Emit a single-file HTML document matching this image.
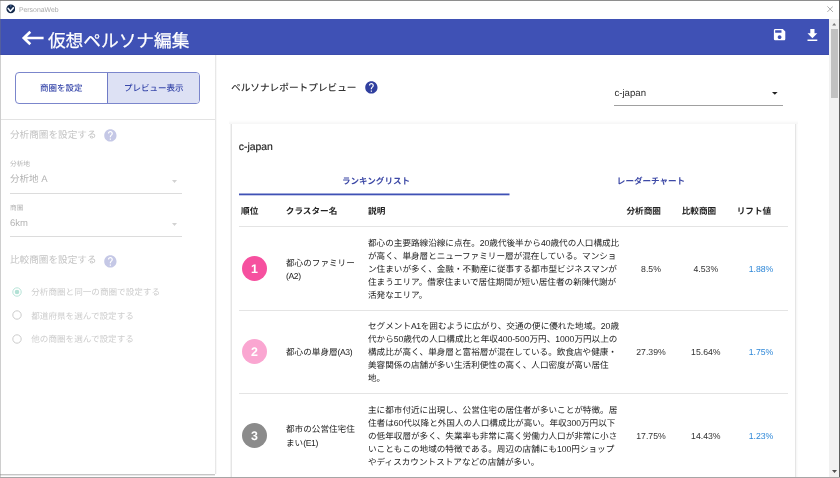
<!DOCTYPE html>
<html lang="ja">
<head>
<meta charset="utf-8">
<title>PersonaWeb</title>
<style>
*{box-sizing:border-box;margin:0;padding:0}
html,body{width:840px;height:478px;overflow:hidden;background:#fff}
body{font-family:"Liberation Sans","Noto Sans CJK JP",sans-serif;color:#222;position:relative;text-rendering:geometricPrecision}
.t{position:absolute;white-space:nowrap;overflow:visible}
.a{position:absolute}
.n{letter-spacing:0}
.k{letter-spacing:-.4px}
.dis{color:#c4c4c4}
.b{font-weight:500}
.bb{font-weight:700}
.ind{color:#3949ab}
.tab{color:#3d49a6}
.hl{position:absolute;height:1px}
.rk{position:absolute;width:25.200px;height:25.200px;border-radius:50%;color:#fff;font-size:12.4px;line-height:27.800px;text-align:center;font-weight:bold}
.ds{position:absolute;left:368px;font-size:8.6px;white-space:nowrap;color:#222}
.ds div{height:13.070px;line-height:13.070px}
.cn{position:absolute;left:286px;font-size:8.6px;white-space:nowrap;color:#222}
.cn div{height:13.070px;line-height:13.070px}
</style>
</head>
<body>
<div id="root" style="position:absolute;left:0;top:0;width:840px;height:478px;will-change:transform">
<div class="a" style="left:0;top:0;width:840px;height:19px;background:#fff"></div>
<svg class="a" style="left:5.600px;top:4.200px" width="9.600" height="9.600" viewBox="0 0 10 10"><circle cx="5" cy="5" r="4.600" fill="#13284a"/><path d="M2.300 4.600L4.600 7.500 7.700 4" stroke="#eef3fb" stroke-width="1.700" fill="none" stroke-linejoin="round" stroke-linecap="round"/><path d="M4.600.9h.9v2.600h-.9z" fill="#6f93c8" opacity=".75"/></svg>
<div class="t" style="left:18.9px;top:4.90px;font-size:6.9px;line-height:12px;height:12px;color:#a8a8a8;">PersonaWeb</div>
<svg class="a" style="left:826.900px;top:5.900px" width="6.300" height="6.300" viewBox="0 0 7 7"><path d="M.4.400l6.200 6.200M6.600.400L.4 6.600" stroke="#8c8c8c" stroke-width=".8" fill="none"/></svg>
<div class="a" style="left:0;top:19px;width:829px;height:36px;background:linear-gradient(#3f51b5 35px,#3c4cab 35px)"></div>
<svg class="a" style="left:21px;top:29.900px" width="23" height="16" viewBox="0 0 23 16"><path d="M22.600 8H3.500M9.300 1.700L2.800 8l6.500 6.300" stroke="#fff" stroke-width="2.700" fill="none" stroke-linejoin="miter"/></svg>
<div class="t" style="left:47.9px;top:27.80px;font-size:17.7px;line-height:26px;height:26px;color:#fff;-webkit-text-stroke:.25px #fff;">仮想ペルソナ編集</div>
<svg class="a" style="left:771.900px;top:27.200px" width="15.200" height="15.200" viewBox="0 0 24 24"><path fill="#fff" d="M17 3H5a2 2 0 0 0-2 2v14a2 2 0 0 0 2 2h14c1.100 0 2-.9 2-2V7l-4-4zm-5 16c-1.660 0-3-1.340-3-3s1.340-3 3-3 3 1.340 3 3-1.340 3-3 3zm3-10H5V5h10v4z"/></svg>
<svg class="a" style="left:804.100px;top:26.850px" width="16.800" height="16.800" viewBox="0 0 24 24"><path fill="#fff" d="M19 9h-4V3H9v6H5l7 7 7-7zM5 18v2h14v-2H5z"/></svg>
<div class="a" style="left:829px;top:19px;width:10px;height:458px;background:#f1f1f1"></div>
<div class="a" style="left:830.500px;top:29px;width:7px;height:69px;background:#c1c1c1"></div>
<svg class="a" style="left:831.800px;top:23.300px" width="4.400" height="2.400" viewBox="0 0 5 3"><path d="M0 3L2.500 0 5 3z" fill="#7a7a7a"/></svg>
<svg class="a" style="left:831.500px;top:469.500px" width="5" height="3" viewBox="0 0 5 3"><path d="M0 0L2.500 3 5 0z" fill="#505050"/></svg>
<div class="a" style="left:0;top:55px;width:217px;height:419px;background:linear-gradient(90deg,#fff 215px,#e6e6e6 215px,#e9e9e9 216px,#f8f8f8 216px)"></div>
<div class="a" style="left:0;top:474px;width:214.500px;height:2px;background:linear-gradient(#c6c6c6 1.500px,#e8e8e8 1.500px)"></div>
<div class="a" style="left:15px;top:72px;width:185px;height:31.500px;border:1px solid #7b86cc;border-radius:4px;background:#fff;overflow:hidden"><div class="a" style="left:91px;top:0;width:93px;height:30px;background:#dde1f4;border-left:1px solid #6f7bc6"></div></div>
<div class="t ind b" style="left:15px;top:80.90px;font-size:8.5px;line-height:14px;height:14px;width:92.5px;text-align:center;">商圏を設定</div>
<div class="t ind b" style="left:107.5px;top:80.90px;font-size:8.5px;line-height:14px;height:14px;width:92.5px;text-align:center;">プレビュー表示</div>
<div class="hl" style="left:1px;top:119px;width:214px;background:#e3e3e3"></div>
<div class="t dis" style="left:10px;top:128.50px;font-size:9.62px;line-height:14px;height:14px;">分析商圏を設定する</div>
<svg class="a" style="left:102.62px;top:127.92px" width="14.76" height="14.76" viewBox="0 0 24 24"><path fill="#c5c8e6" d="M12 2C6.480 2 2 6.480 2 12s4.480 10 10 10 10-4.480 10-10S17.520 2 12 2zm1 17h-2v-2h2v2zm2.070-7.750l-.9.920C13.450 12.900 13 13.500 13 15h-2v-.5c0-1.100.450-2.100 1.170-2.830l1.240-1.260c.370-.360.590-.860.590-1.410 0-1.100-.9-2-2-2s-2 .9-2 2H8c0-2.210 1.790-4 4-4s4 1.790 4 4c0 .880-.360 1.680-.930 2.250z"/></svg>
<div class="t" style="left:10px;top:160.20px;font-size:6.7px;line-height:10px;height:10px;color:#b4b4b4;">分析地</div>
<div class="t" style="left:10px;top:173.00px;font-size:9.5px;line-height:14px;height:14px;color:#b4b4b4;">分析地 A</div>
<svg class="a" style="left:171.500px;top:179.800px" width="5" height="3" viewBox="0 0 5 3"><path d="M0 0h5L2.500 3z" fill="#d2d2d2"/></svg>
<div class="hl" style="left:10px;top:193px;width:171.500px;background:#dcdcdc"></div>
<div class="t" style="left:10px;top:203.80px;font-size:6.7px;line-height:10px;height:10px;color:#b4b4b4;">商圏</div>
<div class="t" style="left:10px;top:216.90px;font-size:9.5px;line-height:14px;height:14px;color:#b4b4b4;">6km</div>
<svg class="a" style="left:171.500px;top:222.800px" width="5" height="3" viewBox="0 0 5 3"><path d="M0 0h5L2.500 3z" fill="#d2d2d2"/></svg>
<div class="hl" style="left:10px;top:236px;width:171.500px;background:#dcdcdc"></div>
<div class="t dis" style="left:10px;top:254.10px;font-size:9.62px;line-height:14px;height:14px;">比較商圏を設定する</div>
<svg class="a" style="left:102.62px;top:253.62px" width="14.76" height="14.76" viewBox="0 0 24 24"><path fill="#c5c8e6" d="M12 2C6.480 2 2 6.480 2 12s4.480 10 10 10 10-4.480 10-10S17.520 2 12 2zm1 17h-2v-2h2v2zm2.070-7.750l-.9.920C13.450 12.900 13 13.500 13 15h-2v-.5c0-1.100.450-2.100 1.170-2.830l1.240-1.260c.370-.360.590-.860.590-1.410 0-1.100-.9-2-2-2s-2 .9-2 2H8c0-2.210 1.790-4 4-4s4 1.790 4 4c0 .880-.360 1.680-.930 2.250z"/></svg>
<svg class="a" style="left:11px;top:285.70px" width="12" height="12" viewBox="0 0 12 12"><circle cx="6" cy="6" r="4.200" fill="none" stroke="#b2e1d5" stroke-width=".95"/><circle cx="6" cy="6" r="2.300" fill="#b2e1d5"/></svg>
<div class="t" style="left:31.3px;top:285.10px;font-size:8.58px;line-height:14px;height:14px;color:#cdcdcd;">分析商圏と同一の商圏で設定する</div>
<svg class="a" style="left:11px;top:309.30px" width="12" height="12" viewBox="0 0 12 12"><circle cx="6" cy="6" r="4.200" fill="none" stroke="#c9c9c9" stroke-width=".95"/></svg>
<div class="t" style="left:31.3px;top:308.70px;font-size:8.58px;line-height:14px;height:14px;color:#cdcdcd;">都道府県を選んで設定する</div>
<svg class="a" style="left:11px;top:332.90px" width="12" height="12" viewBox="0 0 12 12"><circle cx="6" cy="6" r="4.200" fill="none" stroke="#c9c9c9" stroke-width=".95"/></svg>
<div class="t" style="left:31.3px;top:332.30px;font-size:8.58px;line-height:14px;height:14px;color:#cdcdcd;">他の商圏を選んで設定する</div>
<div class="t b" style="left:231px;top:81.70px;font-size:9.67px;line-height:14px;height:14px;color:#333;">ペルソナレポートプレビュー</div>
<svg class="a" style="left:364.22px;top:80.12px" width="14.76" height="14.76" viewBox="0 0 24 24"><path fill="#303f9f" d="M12 2C6.480 2 2 6.480 2 12s4.480 10 10 10 10-4.480 10-10S17.520 2 12 2zm1 17h-2v-2h2v2zm2.070-7.750l-.9.920C13.450 12.900 13 13.500 13 15h-2v-.5c0-1.100.450-2.100 1.170-2.830l1.240-1.260c.370-.360.590-.860.590-1.410 0-1.100-.9-2-2-2s-2 .9-2 2H8c0-2.210 1.790-4 4-4s4 1.790 4 4c0 .880-.360 1.680-.930 2.250z"/></svg>
<div class="t" style="left:614.5px;top:87.00px;font-size:9.6px;line-height:14px;height:14px;color:#2a2a2a;">c-japan</div>
<svg class="a" style="left:772px;top:92px" width="5.600" height="2.800" viewBox="0 0 6 3"><path d="M0 0h6L3 3z" fill="#222"/></svg>
<div class="hl" style="left:614px;top:105px;width:168.500px;background:#a0a0a0"></div>
<div class="a" style="left:229px;top:120px;width:569px;height:4px;background:linear-gradient(rgba(0,0,0,0),rgba(0,0,0,.035))"></div>
<div class="a" style="left:230px;top:124px;width:568px;height:354px;background:linear-gradient(90deg,rgba(0,0,0,.02),rgba(0,0,0,.1) 1.500px,#fff 2px,#fff 565px,rgba(0,0,0,.1) 565.500px,rgba(0,0,0,.03) 566.500px,rgba(0,0,0,0) 568px)"></div>
<div class="t" style="left:238.8px;top:140.40px;font-size:10.4px;line-height:16px;height:16px;color:#222;-webkit-text-stroke:.15px #222;">c-japan</div>
<div class="t tab bb" style="left:239px;top:174.00px;font-size:8.55px;line-height:14px;height:14px;width:274px;text-align:center;">ランキングリスト</div>
<div class="t tab bb" style="left:514px;top:174.00px;font-size:8.55px;line-height:14px;height:14px;width:274px;text-align:center;">レーダーチャート</div>
<svg class="a" style="left:239px;top:192px" width="271" height="5" viewBox="0 0 271 5"><rect x="0" y="1.500" width="270.500" height="1.800" fill="#3f51b5"/></svg>
<div class="t bb" style="left:241px;top:204.00px;font-size:8.65px;line-height:14px;height:14px;">順位</div>
<div class="t bb" style="left:285.8px;top:204.00px;font-size:8.65px;line-height:14px;height:14px;">クラスター名</div>
<div class="t bb" style="left:368px;top:204.00px;font-size:8.65px;line-height:14px;height:14px;">説明</div>
<div class="t bb" style="left:613.7px;top:204.00px;font-size:8.65px;line-height:14px;height:14px;width:60px;text-align:center;">分析商圏</div>
<div class="t bb" style="left:668.9px;top:204.00px;font-size:8.65px;line-height:14px;height:14px;width:60px;text-align:center;">比較商圏</div>
<div class="t bb" style="left:724px;top:204.00px;font-size:8.65px;line-height:14px;height:14px;width:60px;text-align:center;">リフト値</div>
<div class="hl" style="left:239px;top:226px;width:548.500px;background:#e4e4e4"></div>
<div class="rk" style="left:241.900px;top:255.84px;background:#f6509f">1</div>
<div class="cn" style="top:256.67px"><div>都心のファミリー</div><div><span class="k">(A2)</span></div></div>
<div class="ds" style="top:236.77px"><div>都心の主要路線沿線に点在。<span class="n">20</span>歳代後半から<span class="n">40</span>歳代の人口構成比</div><div>が高く、単身層とニューファミリー層が混在している。マンショ</div><div>ン住まいが多く、金融・不動産に従事する都市型ビジネスマンが</div><div>住まうエリア。借家住まいで居住期間が短い居住者の新陳代謝が</div><div>活発なエリア。</div></div>
<div class="t" style="left:621px;top:261.74px;font-size:8.7px;line-height:14px;height:14px;width:60px;text-align:center;color:#333;">8.5%</div>
<div class="t" style="left:675.8px;top:261.74px;font-size:8.7px;line-height:14px;height:14px;width:60px;text-align:center;color:#333;">4.53%</div>
<div class="t" style="left:731px;top:261.74px;font-size:8.7px;line-height:14px;height:14px;width:60px;text-align:center;color:#2f88d8;">1.88%</div>
<div class="hl" style="left:239px;top:310px;width:548.500px;background:#e4e4e4"></div>
<div class="rk" style="left:241.900px;top:339.24px;background:#faa6d1">2</div>
<div class="cn" style="top:346.11px"><div>都心の単身層<span class="k">(A3)</span></div></div>
<div class="ds" style="top:320.17px"><div>セグメント<span class="k">A1</span>を囲むように広がり、交通の便に優れた地域。<span class="n">20</span>歳</div><div>代から<span class="n">50</span>歳代の人口構成比と年収<span class="n">400-500</span>万円、<span class="n">1000</span>万円以上の</div><div>構成比が高く、単身層と富裕層が混在している。飲食店や健康・</div><div>美容関係の店舗が多い生活利便性の高く、人口密度が高い居住</div><div>地。</div></div>
<div class="t" style="left:621px;top:345.14px;font-size:8.7px;line-height:14px;height:14px;width:60px;text-align:center;color:#333;">27.39%</div>
<div class="t" style="left:675.8px;top:345.14px;font-size:8.7px;line-height:14px;height:14px;width:60px;text-align:center;color:#333;">15.64%</div>
<div class="t" style="left:731px;top:345.14px;font-size:8.7px;line-height:14px;height:14px;width:60px;text-align:center;color:#2f88d8;">1.75%</div>
<div class="hl" style="left:239px;top:393px;width:548.500px;background:#e4e4e4"></div>
<div class="rk" style="left:241.900px;top:422.64px;background:#8b8b8b">3</div>
<div class="cn" style="top:423.47px"><div>都市の公営住宅住</div><div>まい<span class="k">(E1)</span></div></div>
<div class="ds" style="top:403.56px"><div>主に都市付近に出現し、公営住宅の居住者が多いことが特徴。居</div><div>住者は<span class="n">60</span>代以降と外国人の人口構成比が高い。年収<span class="n">300</span>万円以下</div><div>の低年収層が多く、失業率も非常に高く労働力人口が非常に小さ</div><div>いこともこの地域の特徴である。周辺の店舗にも<span class="n">100</span>円ショップ</div><div>やディスカウントストアなどの店舗が多い。</div></div>
<div class="t" style="left:621px;top:428.54px;font-size:8.7px;line-height:14px;height:14px;width:60px;text-align:center;color:#333;">17.75%</div>
<div class="t" style="left:675.8px;top:428.54px;font-size:8.7px;line-height:14px;height:14px;width:60px;text-align:center;color:#333;">14.43%</div>
<div class="t" style="left:731px;top:428.54px;font-size:8.7px;line-height:14px;height:14px;width:60px;text-align:center;color:#2f88d8;">1.23%</div>
<div class="a" style="left:0;top:0;width:840px;height:1px;background:#8e8e8e"></div>
<div class="a" style="left:0;top:0;width:1px;height:478px;background:rgba(120,120,120,.36)"></div>
<div class="a" style="left:839px;top:0;width:1px;height:478px;background:#5e5e5e"></div>
<div class="a" style="left:0;top:477px;width:840px;height:1px;background:#a6a6a6"></div>
</div>
</body>
</html>
